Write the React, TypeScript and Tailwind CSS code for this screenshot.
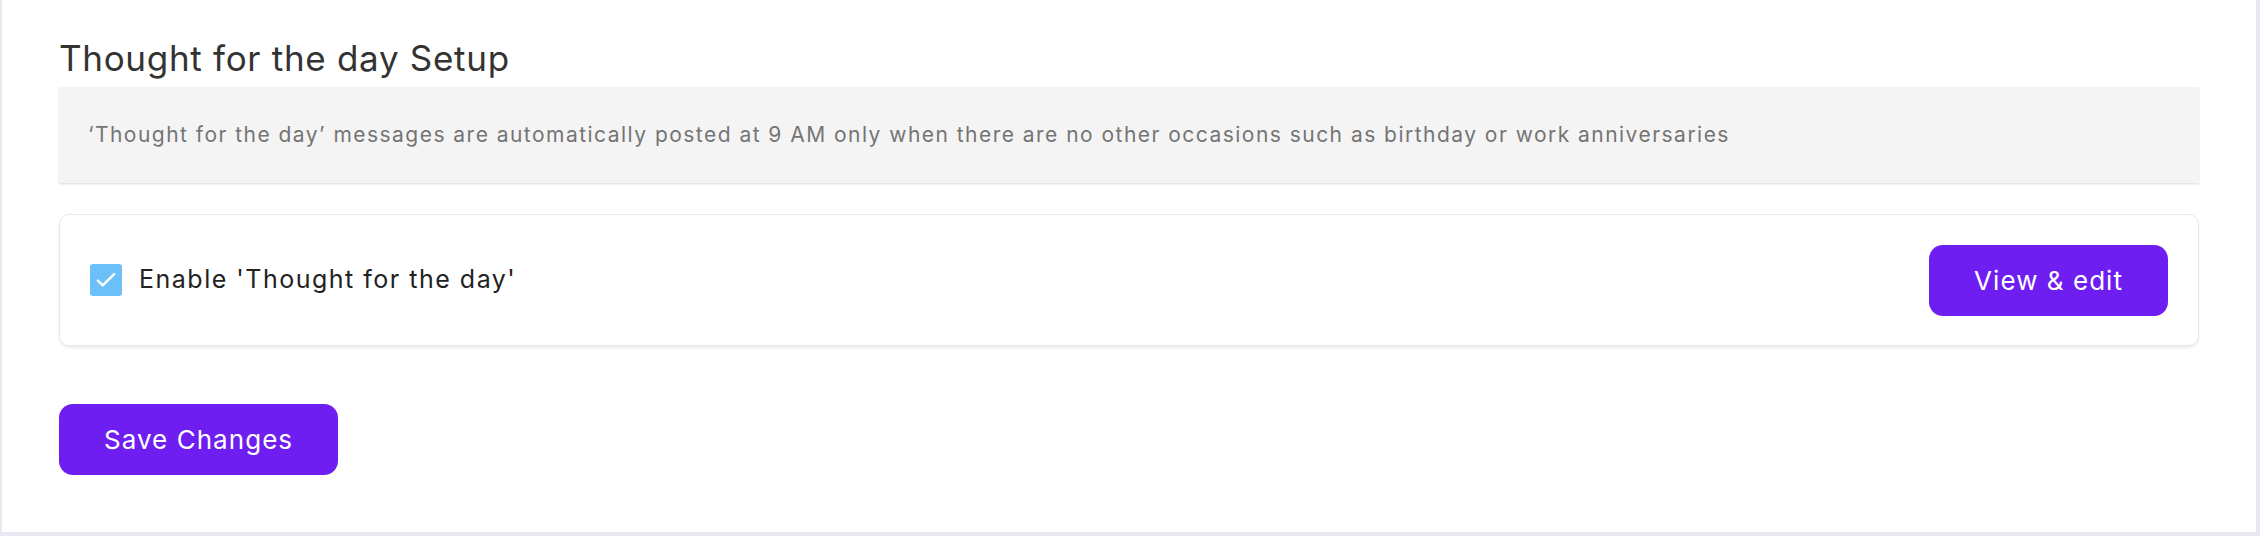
import { useState } from 'react';

const font = { fontFamily: 'Inter, "Open Sans", sans-serif' };

const ThoughtSetup = () => {
  const [enabled, setEnabled] = useState<boolean>(true);

  return (
    <div className="h-[536px] bg-[#e7e8f1] pl-[2px] pr-[4px] pb-[4px]" style={font}>
      <div className="h-full bg-white px-[57px] pt-[38px]">
        <h2 className="text-[35px] leading-[40px] tracking-[0.02em] text-[#333333]">Thought for the day Setup</h2>

        <div className="mt-[9px] h-[96px] flex items-center bg-[#f4f4f4] pl-[29px] shadow-[0_1px_2px_rgba(0,0,0,0.15)]">
          <p className="text-[21px] tracking-[0.07em] text-[#747474]">
            ‘Thought for the day’ messages are automatically posted at 9 AM only when there are no other occasions such as birthday or work anniversaries
          </p>
        </div>

        <div className="mt-[31px] h-[132px] flex items-center justify-between rounded-[10px] border border-[#e6e8f0] px-[30px] shadow-[0_2px_3px_rgba(0,0,0,0.08)]">
          <label className="flex items-center gap-[17px] cursor-pointer">
            <button
              type="button"
              onClick={() => setEnabled(!enabled)}
              className={enabled ? 'w-[32px] h-[32px] rounded-[3px] bg-[#6bc0f9] flex items-center justify-center' : 'w-[32px] h-[32px] rounded-[3px] border-2 border-gray-300 bg-white'}
            >
              {enabled && (
                <svg width="26" height="26" viewBox="0 0 24 24" fill="none" stroke="white" strokeWidth="2.2" strokeLinecap="round" strokeLinejoin="round">
                  <path d="M4.5 12.5l4.5 4.5L19.5 6.5" />
                </svg>
              )}
            </button>
            <span className="text-[25px] tracking-[0.06em] text-[#222222]">Enable 'Thought for the day'</span>
          </label>
          <button type="button" className="h-[71px] px-[45px] rounded-[14px] bg-[#6f1ef1] text-white text-[26px] tracking-[0.04em]">
            View &amp; edit
          </button>
        </div>

        <button type="button" className="mt-[58px] h-[71px] px-[45px] rounded-[14px] bg-[#6f1ef1] text-white text-[26px] tracking-[0.04em]">
          Save Changes
        </button>
      </div>
    </div>
  );
};

export default function App() {
  return <ThoughtSetup />;
}
